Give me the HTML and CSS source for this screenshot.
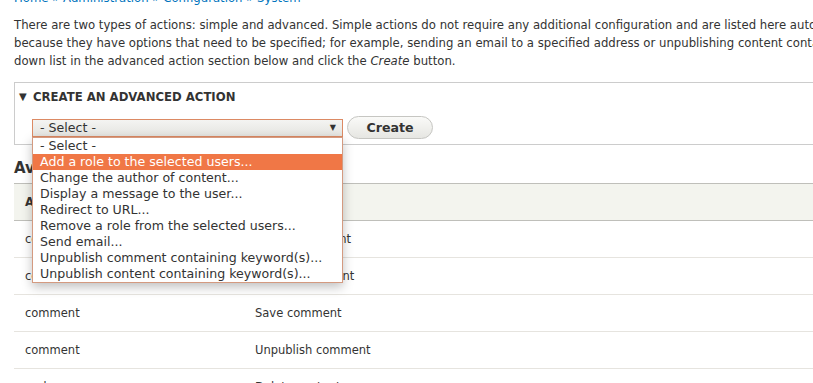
FILE: index.html
```html
<!DOCTYPE html>
<html lang="en">
<head>
    <title>Actions</title>
    <link rel="stylesheet" href="styles.css">
</head>
<body>
    <div class="page">
        <div class="breadcrumb">
            <a href="#">Home</a> » <a href="#">Administration</a> » <a href="#">Configuration</a> » <a href="#">System</a>
        </div>

        <p class="intro">There are two types of actions: simple and advanced. Simple actions do not require any additional configuration and are listed here automatically. Advanced actions need to be created and configured before they can be used<br>
        because they have options that need to be specified; for example, sending an email to a specified address or unpublishing content containing certain words. To create an advanced action, select the action from the drop-<br>
        down list in the advanced action section below and click the <em>Create</em> button.</p>

        <div class="details">
            <div class="summary"><span class="arrow">▼</span>CREATE AN ADVANCED ACTION</div>
            <div class="form-row">
                <div class="select-box">
                    <span>- Select -</span>
                    <span class="select-arrow">▼</span>
                    <ul class="options">
                        <li>- Select -</li>
                        <li class="active">Add a role to the selected users...</li>
                        <li>Change the author of content...</li>
                        <li>Display a message to the user...</li>
                        <li>Redirect to URL...</li>
                        <li>Remove a role from the selected users...</li>
                        <li>Send email...</li>
                        <li>Unpublish comment containing keyword(s)...</li>
                        <li>Unpublish content containing keyword(s)...</li>
                    </ul>
                </div>
                <button class="create-button">Create</button>
            </div>
        </div>

        <h2 class="section-title">Available actions</h2>

        <table class="actions-table">
            <thead>
                <tr><th class="col-type">Action type</th><th>Label</th></tr>
            </thead>
            <tbody>
                <tr><td class="col-type">comment</td><td>Delete comment</td></tr>
                <tr><td class="col-type">comment</td><td>Publish comment</td></tr>
                <tr><td class="col-type">comment</td><td>Save comment</td></tr>
                <tr><td class="col-type">comment</td><td>Unpublish comment</td></tr>
                <tr><td class="col-type">node</td><td>Delete content</td></tr>
            </tbody>
        </table>
    </div>
</body>
</html>
```

FILE: styles.css
```css
body {
    margin: 0;
    font-family: "DejaVu Sans", sans-serif;
    color: #333;
    background-color: #fff;
    overflow: hidden;
}

a {
    color: #0074bd;
    text-decoration: none;
}

.page {
    padding-left: 14px;
}

.breadcrumb {
    font-size: 11.7px;
    line-height: 18px;
    margin-top: -11px;
    color: #0074bd;
}

.intro {
    margin: 0;
    font-size: 11.7px;
    line-height: 18px;
    white-space: nowrap;
    padding-top: 9px;
}

.details {
    margin-top: 12px;
    border: 1px solid #ccc;
    border-right: none;
    height: 61px;
    width: 900px;
}

.summary {
    font-size: 11.7px;
    font-weight: bold;
    line-height: 14px;
    padding: 7px 0 0 4px;
}

.summary .arrow {
    display: inline-block;
    font-size: 10px;
    width: 14px;
    vertical-align: 1px;
}

.form-row {
    display: flex;
    align-items: center;
    gap: 4px;
    padding: 12px 0 0 17px;
}

.select-box {
    position: relative;
    width: 309px;
    height: 16px;
    border: 1px solid #dc8a64;
    background: linear-gradient(#f4f4f2, #e4e4e0);
    font-size: 12.6px;
    line-height: 16px;
    display: flex;
    justify-content: space-between;
}

.select-box span {
    padding-left: 7px;
}

.select-box .select-arrow {
    font-size: 8px;
    padding-right: 6px;
    color: #333;
}

.options {
    position: absolute;
    top: 17px;
    left: -1px;
    width: 309px;
    margin: 0;
    padding: 0;
    list-style: none;
    background: #fff;
    border: 1px solid #d49a80;
    box-shadow: 0 4px 10px rgba(0, 0, 0, 0.25);
    z-index: 5;
}

.options li {
    height: 16px;
    line-height: 16px;
    padding-left: 7px;
    font-size: 12.6px;
    color: #333;
    white-space: nowrap;
}

.options li.active {
    background-color: #f07746;
    color: #fff;
}

.create-button {
    width: 86px;
    height: 23px;
    border: 1px solid #c6c6c2;
    border-radius: 12px;
    background: linear-gradient(#fafaf8, #e6e6e2);
    font-family: "DejaVu Sans", sans-serif;
    font-size: 12.6px;
    font-weight: bold;
    color: #333;
    padding: 0;
}

.section-title {
    font-size: 15px;
    margin: 0;
    padding: 15px 0 7px;
    line-height: 16px;
}

.actions-table {
    border-collapse: collapse;
    width: 900px;
    font-size: 11.5px;
}

.actions-table th {
    text-align: left;
    background-color: #f3f4ee;
    border-top: 1px solid #bfbfba;
    border-bottom: 1px solid #bfbfba;
    height: 36px;
    padding: 0 0 0 11px;
    font-size: 11.7px;
}

.actions-table td {
    height: 36px;
    padding: 0 0 0 11px;
    border-bottom: 1px solid #e6e4df;
}

.actions-table .col-type {
    width: 219px;
}
```
